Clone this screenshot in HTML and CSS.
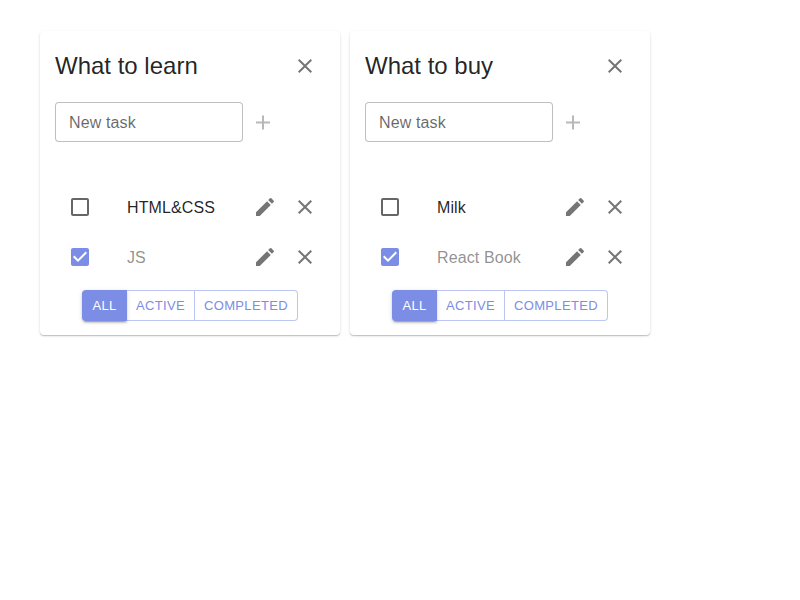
FILE: index.html
```html
<!DOCTYPE html>
<html lang="en">
<head>
<meta charset="utf-8">
<title>Todolists</title>
<link rel="stylesheet" href="styles.css">
</head>
<body>
<svg width="0" height="0" class="defs" aria-hidden="true">
  <symbol id="close" viewBox="0 0 24 24"><path d="M19 6.41L17.59 5 12 10.59 6.41 5 5 6.41 10.59 12 5 17.59 6.41 19 12 13.41 17.59 19 19 17.59 13.41 12z"/></symbol>
  <symbol id="add" viewBox="0 0 24 24"><path d="M19 13.5h-6v6h-2v-6H5v-2h6v-6h2v6h6v2z"/></symbol>
  <symbol id="edit" viewBox="0 0 24 24"><path d="M3 17.25V21h3.75L17.81 9.94l-3.75-3.75L3 17.25zM20.71 7.04c.39-.39.39-1.02 0-1.41l-2.34-2.34a.9959.9959 0 0 0-1.41 0l-1.83 1.83 3.75 3.75 1.83-1.83z"/></symbol>
  <symbol id="box" viewBox="0 0 24 24"><path d="M19 5v14H5V5h14m0-2H5c-1.1 0-2 .9-2 2v14c0 1.1.9 2 2 2h14c1.1 0 2-.9 2-2V5c0-1.1-.9-2-2-2z"/></symbol>
  <symbol id="checked" viewBox="0 0 24 24"><path d="M19 3H5c-1.11 0-2 .9-2 2v14c0 1.1.89 2 2 2h14c1.11 0 2-.9 2-2V5c0-1.1-.89-2-2-2zm-9 14l-5-5 1.41-1.41L10 14.17l7.59-7.59L19 8l-9 9z"/></symbol>
</svg>
<main class="board">
  <section class="card">
    <header class="head"><h1>What to learn</h1><button class="icon-btn"><svg><use href="#close"/></svg></button></header>
    <div class="add-form"><input class="field" placeholder="New task"><button class="icon-btn add" disabled><svg><use href="#add"/></svg></button></div>
    <ul class="tasks">
      <li><span class="check"><svg><use href="#box"/></svg></span><span class="name">HTML&amp;CSS</span><button class="icon-btn"><svg><use href="#edit"/></svg></button><button class="icon-btn"><svg><use href="#close"/></svg></button></li>
      <li class="done"><span class="check"><svg><use href="#checked"/></svg></span><span class="name">JS</span><button class="icon-btn"><svg><use href="#edit"/></svg></button><button class="icon-btn"><svg><use href="#close"/></svg></button></li>
    </ul>
    <div class="filters"><button class="selected">All</button><button>Active</button><button>Completed</button></div>
  </section>
  <section class="card">
    <header class="head"><h1>What to buy</h1><button class="icon-btn"><svg><use href="#close"/></svg></button></header>
    <div class="add-form"><input class="field" placeholder="New task"><button class="icon-btn add" disabled><svg><use href="#add"/></svg></button></div>
    <ul class="tasks">
      <li><span class="check"><svg><use href="#box"/></svg></span><span class="name">Milk</span><button class="icon-btn"><svg><use href="#edit"/></svg></button><button class="icon-btn"><svg><use href="#close"/></svg></button></li>
      <li class="done"><span class="check"><svg><use href="#checked"/></svg></span><span class="name">React Book</span><button class="icon-btn"><svg><use href="#edit"/></svg></button><button class="icon-btn"><svg><use href="#close"/></svg></button></li>
    </ul>
    <div class="filters"><button class="selected">All</button><button>Active</button><button>Completed</button></div>
  </section>
</main>
</body>
</html>
```
FILE: styles.css
```css
* { box-sizing: border-box; }
body { margin: 0; background: #fff; font-family: "Liberation Sans", Arial, sans-serif; color: rgba(0,0,0,.87); }
.defs { display: block; }
button { font: inherit; border: 0; background: none; margin: 0; padding: 0; }
.board { display: flex; gap: 10px; padding: 31px 40px; }
.card { width: 300px; height: 304px; padding: 15px; border-radius: 4px; background: #fff; box-shadow: 0 1px 1px rgba(0,0,0,.18), 0 1px 3px rgba(0,0,0,.12); }
.head { display: flex; align-items: center; justify-content: space-between; height: 40px; }
h1 { margin: 0; font-size: 24px; line-height: 32px; font-weight: 400; }
.icon-btn { display: flex; align-items: center; justify-content: center; width: 40px; height: 40px; color: rgba(0,0,0,.54); }
svg { fill: currentColor; }
.icon-btn svg, .check svg { width: 24px; height: 24px; }
.add { color: rgba(0,0,0,.28); }
.add-form { display: flex; margin-top: 16px; }
.field { width: 188px; height: 40px; padding: 2px 13px 0; border: 1px solid rgba(0,0,0,.25); border-radius: 4px; background: #fff; font: 16px "Liberation Sans", Arial, sans-serif; letter-spacing: .12px; outline: 0; }
.field::placeholder { color: rgba(0,0,0,.6); opacity: 1; }
.tasks { list-style: none; margin: 40px 0 0; padding: 0; }
.tasks li { display: flex; align-items: center; height: 50px; }
.check { display: flex; width: 72px; padding-left: 13px; color: rgba(0,0,0,.6); }
.name { flex: 1; padding-top: 2px; font-size: 16px; letter-spacing: .12px; }
.done .name { opacity: .5; }
.done .check { color: #7b8de5; }
.filters { display: flex; width: 216px; height: 31px; margin: 8px auto 0; border-radius: 4px; }
.filters button { border: 1px solid rgba(123,141,229,.5); border-left: 0; height: 31px; color: #7b8de5; font-size: 13px; letter-spacing: .36px; text-transform: uppercase; width: 68px; }
.filters button:last-child { width: 103px; border-radius: 0 4px 4px 0; }
.filters .selected { width: 45px; border: 0; border-radius: 4px 0 0 4px; background: #7b8de5; color: #fff; box-shadow: 0 3px 1px -2px rgba(0,0,0,.2), 0 2px 2px rgba(0,0,0,.14), 0 1px 5px rgba(0,0,0,.12); }
```
